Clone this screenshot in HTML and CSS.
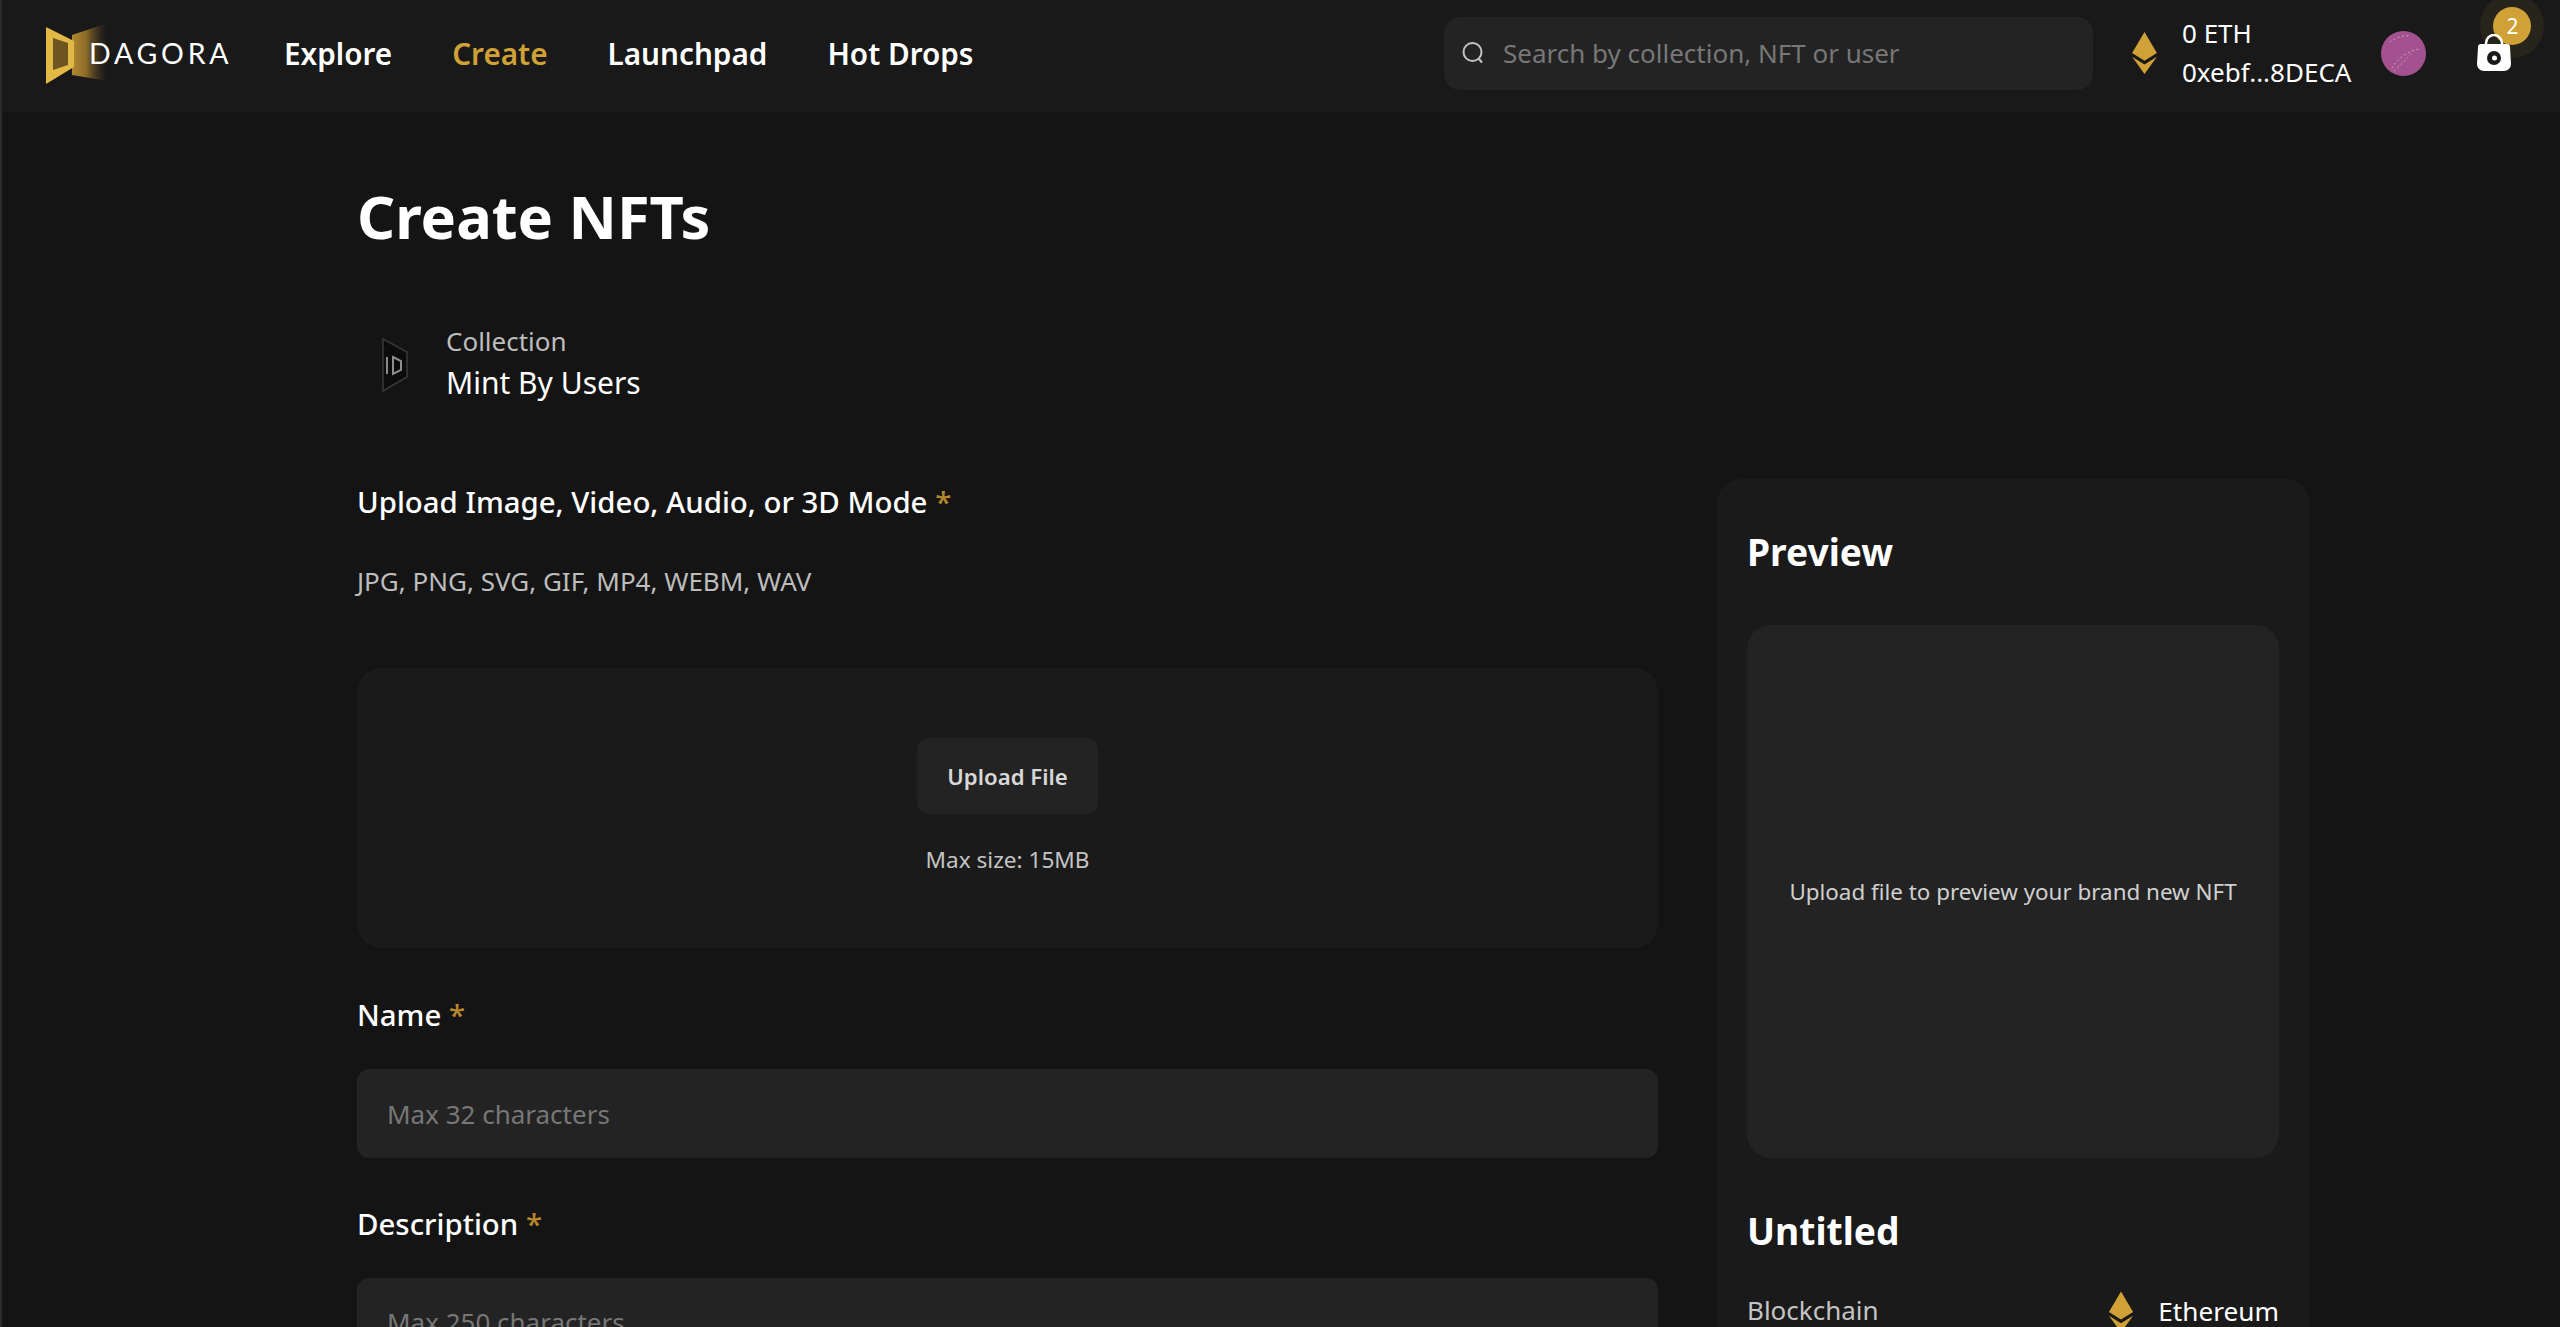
FILE: index.html
```html
<!DOCTYPE html>
<html lang="en">

<head>
    <meta charset="UTF-8">
    <meta name="viewport" content="width=device-width, initial-scale=1.0">
    <title>Create NFTs</title>
    <link rel="stylesheet" href="styles.css">
</head>

<body>

    <header class="topbar">
        <a class="logo" href="#">
            <svg class="logo-mark" width="72" height="72" viewBox="0 0 72 72">
                <defs>
                    <linearGradient id="logo-fade" x1="0" x2="1" y1="0" y2="0">
                        <stop offset="0" stop-color="#b08a30"></stop>
                        <stop offset="0.4" stop-color="#8a6a28"></stop>
                        <stop offset="1" stop-color="#3a3020" stop-opacity="0"></stop>
                    </linearGradient>
                </defs>
                <polygon points="30,18 66,6 66,64 30,58" fill="url(#logo-fade)"></polygon>
                <polygon points="4,10 32,24 32,50 4,67" fill="#e3b945"></polygon>
                <polygon points="11,21 26,26 26,48 11,53" fill="#6d5420"></polygon>
            </svg>
            <span class="logo-text">DAGORA</span>
        </a>
        <nav class="nav">
            <a href="#">Explore</a>
            <a href="#" class="active">Create</a>
            <a href="#">Launchpad</a>
            <a href="#">Hot Drops</a>
        </nav>
        <div class="search">
            <svg width="26" height="26" viewBox="0 0 26 26" fill="none" stroke="#c4c4c4" stroke-width="2" stroke-linecap="round">
                <circle cx="12.500" cy="12" r="9"></circle>
                <path d="M19 19l2.500 3"></path>
            </svg>
            <span>Search by collection, NFT or user</span>
        </div>
        <div class="wallet">
            <svg class="eth" width="27" height="42" viewBox="0 0 28 44">
                <polygon points="14,0 27,22 14,30 1,22" fill="#cfa136"></polygon>
                <polygon points="1,26 14,34 27,26 14,44" fill="#cfa136"></polygon>
            </svg>
            <div class="wallet-text">
                <div>0 ETH</div>
                <div>0xebf...8DECA</div>
            </div>
        </div>
        <svg class="avatar" width="45" height="45" viewBox="0 0 45 45">
            <circle cx="22.500" cy="22.500" r="22.500" fill="#a4528f"></circle>
            <path d="M11 37Q20 22 38 18M13 40Q24 30 30 23M9 11Q18 4 30 5" fill="none" stroke="#d9c3d3" stroke-width="1" stroke-dasharray="1.500 3"></path>
        </svg>
        <div class="cart">
            <div class="badge">2</div>
            <svg class="bag" width="34" height="38" viewBox="0 0 34 38">
                <path d="M9 12V9a8 8 0 0 1 16 0v3" fill="none" stroke="#fff" stroke-width="2.500"></path>
                <path d="M4 10h26a3 3 0 0 1 3 3l1 17a7 7 0 0 1-7 7H7a7 7 0 0 1-7-7l1-17a3 3 0 0 1 3-3z" fill="#fff"></path>
                <circle cx="17" cy="24" r="7" fill="#191919"></circle>
                <circle cx="17.500" cy="24" r="2.500" fill="#fff"></circle>
            </svg>
        </div>
    </header>

    <main class="page">
        <h1>Create NFTs</h1>

        <div class="collection">
            <svg class="collection-icon" width="26" height="54" viewBox="0 0 26 54">
                <polygon points="1,1 25,14 25,39 1,53" fill="#0c0c0c" stroke="#383838" stroke-width="1.500"></polygon>
                <path d="M5 19v17" stroke="#8a8a8a" stroke-width="2"></path>
                <path d="M11 19l8 4v9l-8 4z" fill="none" stroke="#8f8f8f" stroke-width="2"></path>
            </svg>
            <div>
                <div class="collection-label">Collection</div>
                <div class="collection-name">Mint By Users</div>
            </div>
        </div>

        <div class="columns">
            <section class="form">
                <h4>Upload Image, Video, Audio, or 3D Mode <span class="star">*</span></h4>
                <p class="formats">JPG, PNG, SVG, GIF, MP4, WEBM, WAV</p>
                <div class="upload">
                    <button class="upload-btn">Upload File</button>
                    <p>Max size: 15MB</p>
                </div>
                <h4 class="name-label">Name <span class="star">*</span></h4>
                <div class="field">Max 32 characters</div>
                <h4 class="desc-label">Description <span class="star">*</span></h4>
                <div class="field textarea">Max 250 characters</div>
            </section>

            <aside class="preview">
                <h3>Preview</h3>
                <div class="preview-box">Upload file to preview your brand new NFT</div>
                <h2>Untitled</h2>
                <div class="row">
                    <span class="row-label">Blockchain</span>
                    <span class="chain">
                        <svg width="26" height="42" viewBox="0 0 28 44">
                            <polygon points="14,0 27,22 14,30 1,22" fill="#cfa136"></polygon>
                            <polygon points="1,26 14,34 27,26 14,44" fill="#cfa136"></polygon>
                        </svg>
                        Ethereum
                    </span>
                </div>
            </aside>
        </div>
    </main>

</body>

</html>
```

FILE: styles.css
```css
* {
    margin: 0;
    padding: 0;
    box-sizing: border-box;
    font-family: "Noto Sans", sans-serif;
}

html,
body {
    height: 100%;
    overflow: hidden;
}

body {
    background-color: #141414;
    color: #fff;
    border-left: 2px solid #2b2b2b;
}

a {
    color: #fff;
    text-decoration: none;
}

.topbar {
    display: flex;
    align-items: center;
    height: 112px;
    padding-left: 40px;
    padding-bottom: 6px;
    background-color: #191919;
}

.logo {
    display: flex;
    align-items: center;
    width: 242px;
}

.logo-mark {
    margin-right: -25px;
}

.logo-text {
    font-family: "Lato", sans-serif;
    font-size: 28.500px;
    letter-spacing: 3.800px;
    font-weight: 400;
}

.nav {
    display: flex;
    gap: 60px;
    width: 1160px;
}

.nav a {
    font-size: 29.700px;
    font-weight: 600;
}

.nav .active {
    color: #cfa136;
}

.search {
    display: flex;
    align-items: center;
    gap: 17px;
    width: 649px;
    height: 73px;
    padding-left: 16px;
    background-color: #232323;
    border-radius: 16px;
    font-size: 26px;
    color: #777;
}

.wallet {
    display: flex;
    align-items: center;
    gap: 24px;
    margin-left: 38px;
}

.wallet-text {
    font-size: 26px;
    line-height: 39px;
}

.avatar {
    margin-left: 30px;
}

.cart {
    position: relative;
    margin-left: 51px;
    line-height: 0;
}

.bag {
    position: relative;
}

.badge {
    position: absolute;
    top: -27px;
    left: 16px;
    display: flex;
    align-items: center;
    justify-content: center;
    width: 38px;
    height: 38px;
    border-radius: 50%;
    background-color: #cfa136;
    box-shadow: 0 0 0 13px rgba(207, 161, 54, 0.08);
    font-size: 21px;
    line-height: 1;
}

.page {
    padding: 66px 0 0 355px;
}

h1 {
    font-size: 59.500px;
    font-weight: 700;
    line-height: 75px;
}

.collection {
    display: flex;
    align-items: center;
    gap: 38px;
    margin-top: 70px;
    margin-left: 25px;
}

.collection-label {
    font-size: 26px;
    line-height: 36px;
    color: #bdbdbd;
}

.collection-name {
    font-size: 30px;
    line-height: 48px;
}

.columns {
    display: flex;
    gap: 59px;
    margin-top: 72px;
}

.form {
    width: 1301px;
    padding-top: 2px;
}

h4 {
    font-size: 29.400px;
    font-weight: 500;
    line-height: 42px;
}

.star {
    color: #b8882a;
}

.formats {
    margin-top: 40px;
    font-size: 26px;
    line-height: 36px;
    color: #bdbdbd;
}

.upload {
    display: flex;
    flex-direction: column;
    align-items: center;
    height: 280px;
    margin-top: 69px;
    padding-top: 70px;
    background-color: #1a1a1a;
    border-radius: 24px;
}

.upload-btn {
    width: 181px;
    height: 76px;
    border: none;
    border-radius: 12px;
    background-color: #232323;
    color: #d8d8d8;
    font-size: 22.200px;
    font-weight: 600;
}

.upload p {
    margin-top: 29px;
    font-size: 22.600px;
    line-height: 34px;
    color: #c4c4c4;
}

.name-label {
    margin-top: 46px;
}

.field {
    display: flex;
    align-items: center;
    height: 89px;
    margin-top: 33px;
    padding-left: 30px;
    background-color: #232323;
    border-radius: 12px;
    font-size: 26px;
    color: #777;
}

.desc-label {
    margin-top: 45px;
}

.textarea {
    height: 200px;
    align-items: flex-start;
    padding-top: 26px;
}

.preview {
    width: 592px;
    height: 900px;
    padding: 47px 30px 0;
    background-color: #1a1a1a;
    border-radius: 24px;
}

h3 {
    font-size: 37.200px;
    font-weight: 700;
    line-height: 52px;
}

.preview-box {
    display: flex;
    align-items: center;
    justify-content: center;
    height: 533px;
    margin-top: 47px;
    background-color: #232323;
    border-radius: 24px;
    font-size: 22.400px;
    color: #d0d0d0;
}

h2 {
    margin-top: 47px;
    font-size: 37.200px;
    font-weight: 700;
    line-height: 52px;
}

.row {
    display: flex;
    justify-content: space-between;
    align-items: center;
    margin-top: 32px;
}

.row-label {
    font-size: 26px;
    color: #c4c4c4;
}

.chain {
    display: flex;
    align-items: center;
    gap: 24px;
    padding-top: 2px;
    font-size: 26.200px;
}

.chain svg {
    margin-bottom: -2px;
}
```
